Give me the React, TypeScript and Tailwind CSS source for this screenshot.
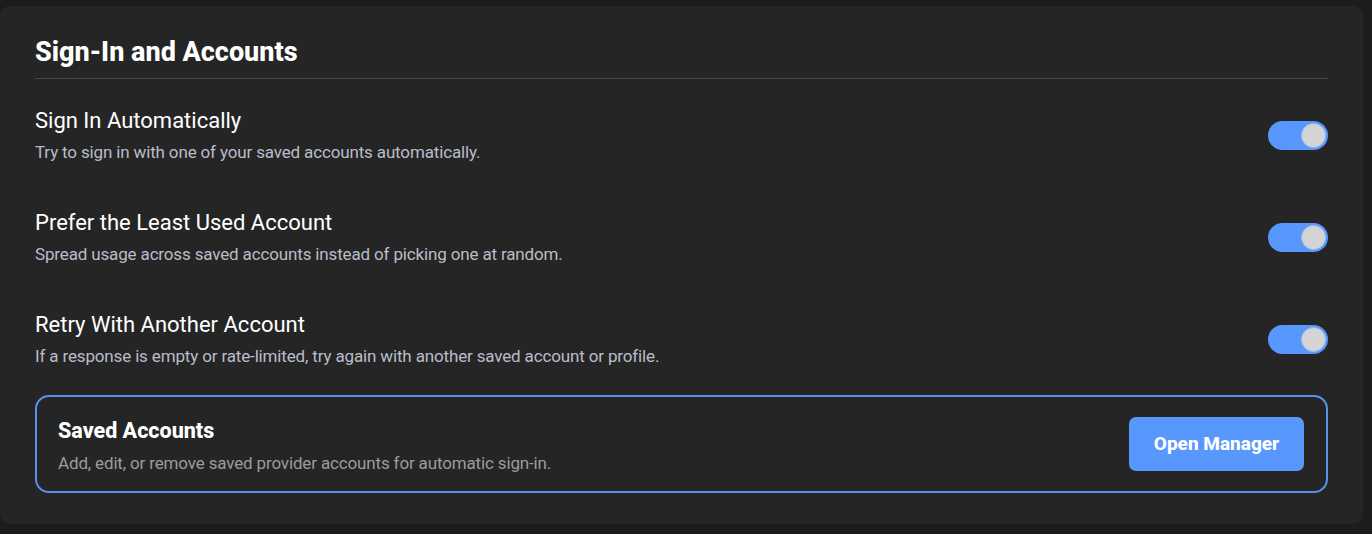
import React from "react";

function Toggle() {
  return (
    <div className="flex h-[29px] w-[60px] shrink-0 items-center justify-end rounded-full bg-[#5897fb] pr-[2px]">
      <div className="h-[25px] w-[25px] rounded-full border border-[#9bbcf2] bg-[#d4d4d4]" />
    </div>
  );
}

function Row({ title, desc }: { title: string; desc: string }) {
  return (
    <div className="flex h-[56px] items-center justify-between">
      <div className="flex flex-col gap-[6px]">
        <div className="text-[22px] leading-[28px] text-white">{title}</div>
        <div className="text-[17px] leading-[22px] text-[#b9bdc9] tracking-[-0.15px]">{desc}</div>
      </div>
      <Toggle />
    </div>
  );
}

export default function App() {
  return (
    <div
      className="h-[534px] w-full bg-[#1c1c1c] pt-[6px] pr-[9px]"
      style={{ fontFamily: "Roboto, 'Noto Sans', sans-serif" }}
    >
      <div className="flex flex-col rounded-[10px] bg-[#252525] px-[35px] pt-[29px] pb-[31px]">
        <h1 className="h-[35px] text-[27px] font-extrabold leading-[35px] text-white">Sign-In and Accounts</h1>
        <div className="mt-[8px] h-px w-full bg-[#464646]" />
        <div className="mt-[28px] flex flex-col gap-[46px]">
          <Row title="Sign In Automatically" desc="Try to sign in with one of your saved accounts automatically." />
          <Row title="Prefer the Least Used Account" desc="Spread usage across saved accounts instead of picking one at random." />
          <Row
            title="Retry With Another Account"
            desc="If a response is empty or rate-limited, try again with another saved account or profile."
          />
        </div>
        <div className="mt-[28px] flex h-[98px] items-center justify-between rounded-[14px] border-2 border-[#5a91ee] pl-[21px] pr-[22px]">
          <div className="flex flex-col gap-[8px] pt-[3px]">
            <div className="text-[21.5px] font-extrabold leading-[26px] text-white">Saved Accounts</div>
            <div className="text-[17px] leading-[22px] text-[#9c9c9c] tracking-[-0.15px]">
              Add, edit, or remove saved provider accounts for automatic sign-in.
            </div>
          </div>
          <button className="flex h-[54px] w-[175px] items-center justify-center rounded-[7px] bg-[#5897fb] text-[19px] font-extrabold text-white">
            Open Manager
          </button>
        </div>
      </div>
    </div>
  );
}
